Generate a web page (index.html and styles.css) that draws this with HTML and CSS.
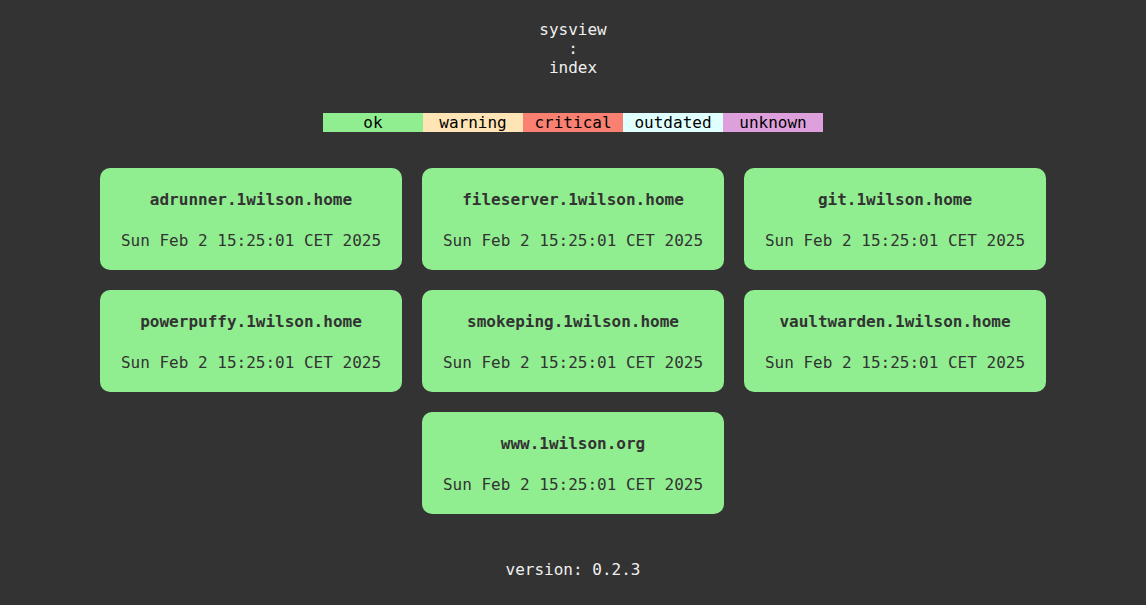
FILE: index.html
```html
<!DOCTYPE html>
<html lang="en">
  <head>
    <meta charset="utf-8" />
    <meta name="viewport" content="width=device-width, initial-scale=1" />
    <title>sysview : index</title>
    <link rel="stylesheet" href="styles.css">
  </head>
  <body>
    <header class="title">
      <div>sysview</div>
      <div>:</div>
      <div>index</div>
    </header>

    <!-- status legend -->
    <div class="legend">
      <span class="legend-item ok">ok</span>
      <span class="legend-item warning">warning</span>
      <span class="legend-item critical">critical</span>
      <span class="legend-item outdated">outdated</span>
      <span class="legend-item unknown">unknown</span>
    </div>

    <main class="hosts">
      <div class="host ok">
        <div class="host-name">adrunner.1wilson.home</div>
        <div class="host-date">Sun Feb 2 15:25:01 CET 2025</div>
      </div>
      <div class="host ok">
        <div class="host-name">fileserver.1wilson.home</div>
        <div class="host-date">Sun Feb 2 15:25:01 CET 2025</div>
      </div>
      <div class="host ok">
        <div class="host-name">git.1wilson.home</div>
        <div class="host-date">Sun Feb 2 15:25:01 CET 2025</div>
      </div>
      <div class="host ok">
        <div class="host-name">powerpuffy.1wilson.home</div>
        <div class="host-date">Sun Feb 2 15:25:01 CET 2025</div>
      </div>
      <div class="host ok">
        <div class="host-name">smokeping.1wilson.home</div>
        <div class="host-date">Sun Feb 2 15:25:01 CET 2025</div>
      </div>
      <div class="host ok">
        <div class="host-name">vaultwarden.1wilson.home</div>
        <div class="host-date">Sun Feb 2 15:25:01 CET 2025</div>
      </div>
      <div class="host ok">
        <div class="host-name">www.1wilson.org</div>
        <div class="host-date">Sun Feb 2 15:25:01 CET 2025</div>
      </div>
    </main>

    <footer class="version">version: 0.2.3</footer>
  </body>
</html>
```

FILE: styles.css
```css
:root {
  --bg-color: #333333;
  --text-color: #f0f0f0;
  --card-text: #333333;
  --ok: #90ee90;
  --warning: #ffe4b5;
  --critical: #fa8072;
  --outdated: #e0ffff;
  --unknown: #dda0dd;
  --font-mono: "DejaVu Sans Mono", monospace;
}

*,
*::before,
*::after {
  margin: 0;
  padding: 0;
  box-sizing: border-box;
}

html,
body {
  font-family: var(--font-mono);
  font-size: 16px;
  background-color: var(--bg-color);
  color: var(--text-color);
}

body {
  display: flex;
  flex-direction: column;
  align-items: center;
  padding-top: 20px;
}

.title {
  text-align: center;
}

.legend {
  display: flex;
  margin-top: 36px;
}

.legend-item {
  width: 100px;
  height: 19px;
  line-height: 19px;
  text-align: center;
  color: #000;
}

.ok { background-color: var(--ok); }
.warning { background-color: var(--warning); }
.critical { background-color: var(--critical); }
.outdated { background-color: var(--outdated); }
.unknown { background-color: var(--unknown); }

.hosts {
  display: flex;
  flex-wrap: wrap;
  justify-content: center;
  gap: 20px;
  width: 946px;
  margin-top: 36px;
}

.host {
  width: 302px;
  height: 102px;
  padding: 22px 8px 20px;
  display: flex;
  flex-direction: column;
  align-items: center;
  justify-content: space-between;
  border-radius: 10px;
  color: var(--card-text);
}

.host-name {
  font-weight: bold;
}

.version {
  margin-top: 46px;
}
```
